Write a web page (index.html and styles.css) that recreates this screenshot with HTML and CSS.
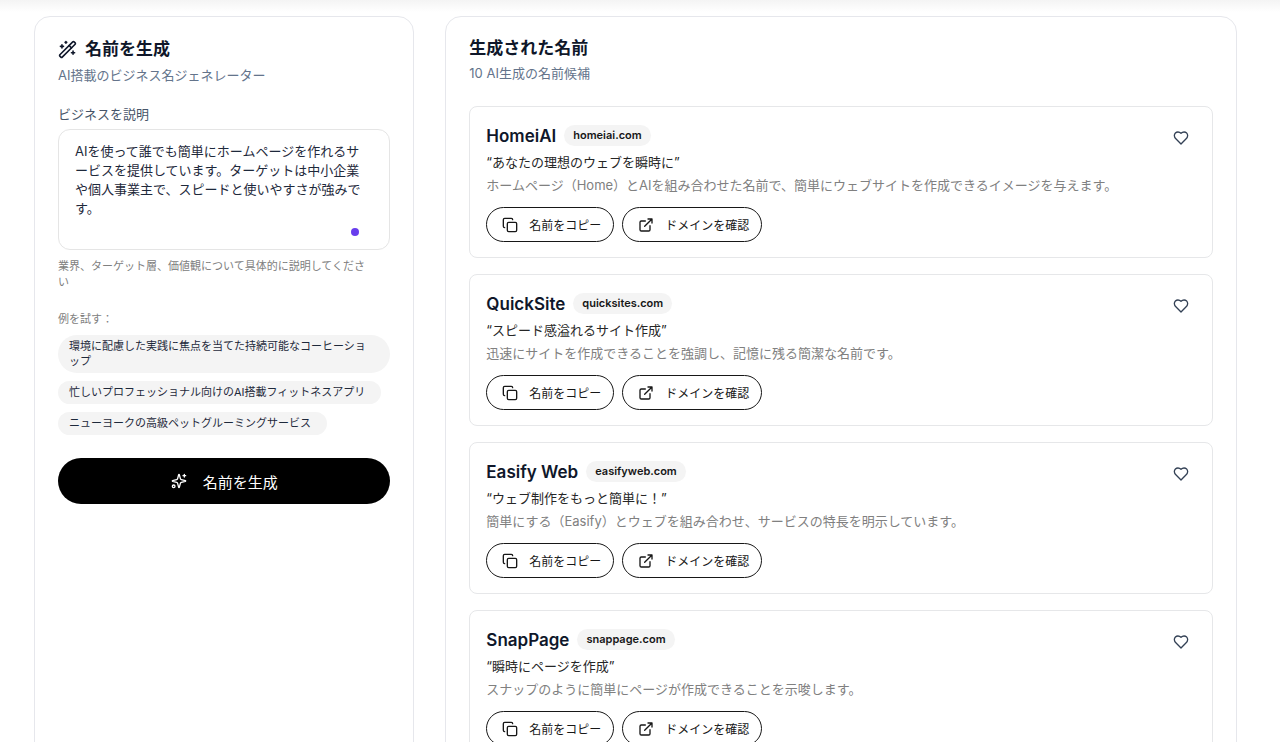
FILE: index.html
```html
<!DOCTYPE html>
<html lang="ja">
<head>
<meta charset="utf-8">
<meta name="viewport" content="width=device-width, initial-scale=1">
<title>名前を生成</title>
<link rel="stylesheet" href="styles.css">
</head>
<body>
<svg class="sprite" aria-hidden="true">
  <symbol id="wand" viewBox="0 0 24 24"><path d="m21.64 3.64-1.28-1.28a1.21 1.21 0 0 0-1.72 0L2.36 18.64a1.21 1.21 0 0 0 0 1.72l1.28 1.28a1.2 1.2 0 0 0 1.72 0L21.64 5.36a1.2 1.2 0 0 0 0-1.72"/><path d="m14 7 3 3M5 6v4M19 14v4M10 2v2M7 8H3M21 16h-4M11 3H9"/></symbol>
  <symbol id="sparkles" viewBox="0 0 24 24"><path d="M9.937 15.5A2 2 0 0 0 8.5 14.063l-6.135-1.582a.5.5 0 0 1 0-.962L8.5 9.936A2 2 0 0 0 9.937 8.5l1.582-6.135a.5.5 0 0 1 .963 0L14.063 8.5A2 2 0 0 0 15.5 9.937l6.135 1.581a.5.5 0 0 1 0 .964L15.5 14.063a2 2 0 0 0-1.437 1.437l-1.582 6.135a.5.5 0 0 1-.963 0z"/><path d="M20 2v4M22 4h-4"/><circle cx="4" cy="20" r="2"/></symbol>
  <symbol id="copy" viewBox="0 0 24 24"><rect x="8" y="8" width="14" height="14" rx="2"/><path d="M4 16c-1.1 0-2-.9-2-2V4c0-1.100.9-2 2-2h10c1.100 0 2 .9 2 2"/></symbol>
  <symbol id="external" viewBox="0 0 24 24"><path d="M15 3h6v6M10 14 21 3M18 13v6a2 2 0 0 1-2 2H5a2 2 0 0 1-2-2V8a2 2 0 0 1 2-2h6"/></symbol>
  <symbol id="heart" viewBox="0 0 24 24"><path d="M19 14c1.490-1.460 3-3.210 3-5.500A5.500 5.500 0 0 0 16.500 3c-1.760 0-3 .5-4.500 2-1.500-1.500-2.740-2-4.500-2A5.500 5.500 0 0 0 2 8.500c0 2.300 1.500 4.050 3 5.500l7 7Z"/></symbol>
</svg>
<main class="page">
  <section class="panel form-panel">
    <h2 class="panel-title"><svg class="icon icon-lg"><use href="#wand"/></svg>名前を生成</h2>
    <p class="panel-subtitle">AI搭載のビジネス名ジェネレーター</p>
    <form class="form">
      <label class="field-label" for="description">ビジネスを説明</label>
      <div class="textbox">
        <textarea class="textarea" id="description">AIを使って誰でも簡単にホームページを作れるサービスを提供しています。ターゲットは中小企業や個人事業主で、スピードと使いやすさが強みです。</textarea>
        <span class="dot"></span>
      </div>
      <p class="hint">業界、ターゲット層、価値観について具体的に説明してください</p>
      <p class="examples-label">例を試す：</p>
      <div class="chips">
        <button class="chip" type="button">環境に配慮した実践に焦点を当てた持続可能なコーヒーショップ</button>
        <button class="chip" type="button">忙しいプロフェッショナル向けのAI搭載フィットネスアプリ</button>
        <button class="chip" type="button">ニューヨークの高級ペットグルーミングサービス</button>
      </div>
      <button class="generate" type="button"><svg class="icon"><use href="#sparkles"/></svg>名前を生成</button>
    </form>
  </section>

  <section class="panel results-panel">
    <h2 class="panel-title results-title">生成された名前</h2>
    <p class="panel-subtitle">10 AI生成の名前候補</p>
    <div class="results">
      <article class="card">
        <div class="card-body">
          <div class="card-head"><h3 class="name">HomeiAI</h3><span class="domain">homeiai.com</span></div>
          <p class="tagline">“あなたの理想のウェブを瞬時に”</p>
          <p class="reason">ホームページ（Home）とAIを組み合わせた名前で、簡単にウェブサイトを作成できるイメージを与えます。</p>
          <div class="actions">
            <button class="action" type="button"><svg class="icon"><use href="#copy"/></svg>名前をコピー</button>
            <button class="action" type="button"><svg class="icon"><use href="#external"/></svg>ドメインを確認</button>
          </div>
        </div>
        <button class="favorite" type="button" aria-label="お気に入り"><svg class="icon"><use href="#heart"/></svg></button>
      </article>
      <article class="card">
        <div class="card-body">
          <div class="card-head"><h3 class="name">QuickSite</h3><span class="domain">quicksites.com</span></div>
          <p class="tagline">“スピード感溢れるサイト作成”</p>
          <p class="reason">迅速にサイトを作成できることを強調し、記憶に残る簡潔な名前です。</p>
          <div class="actions">
            <button class="action" type="button"><svg class="icon"><use href="#copy"/></svg>名前をコピー</button>
            <button class="action" type="button"><svg class="icon"><use href="#external"/></svg>ドメインを確認</button>
          </div>
        </div>
        <button class="favorite" type="button" aria-label="お気に入り"><svg class="icon"><use href="#heart"/></svg></button>
      </article>
      <article class="card">
        <div class="card-body">
          <div class="card-head"><h3 class="name">Easify Web</h3><span class="domain">easifyweb.com</span></div>
          <p class="tagline">“ウェブ制作をもっと簡単に！”</p>
          <p class="reason">簡単にする（Easify）とウェブを組み合わせ、サービスの特長を明示しています。</p>
          <div class="actions">
            <button class="action" type="button"><svg class="icon"><use href="#copy"/></svg>名前をコピー</button>
            <button class="action" type="button"><svg class="icon"><use href="#external"/></svg>ドメインを確認</button>
          </div>
        </div>
        <button class="favorite" type="button" aria-label="お気に入り"><svg class="icon"><use href="#heart"/></svg></button>
      </article>
      <article class="card">
        <div class="card-body">
          <div class="card-head"><h3 class="name">SnapPage</h3><span class="domain">snappage.com</span></div>
          <p class="tagline">“瞬時にページを作成”</p>
          <p class="reason">スナップのように簡単にページが作成できることを示唆します。</p>
          <div class="actions">
            <button class="action" type="button"><svg class="icon"><use href="#copy"/></svg>名前をコピー</button>
            <button class="action" type="button"><svg class="icon"><use href="#external"/></svg>ドメインを確認</button>
          </div>
        </div>
        <button class="favorite" type="button" aria-label="お気に入り"><svg class="icon"><use href="#heart"/></svg></button>
      </article>
    </div>
  </section>
</main>
</body>
</html>
```

FILE: styles.css
```css
* { box-sizing: border-box; }
body, h2, h3, p { margin: 0; }
body {
  background: #fff;
  color: #0f172a;
  font-family: Inter, "Noto Sans CJK JP", sans-serif;
  font-size: 13px;
  line-height: 20px;
}
button, textarea { font-family: inherit; color: inherit; }
button { cursor: pointer; }
.sprite { display: none; }
.icon {
  width: 16px;
  height: 16px;
  flex: none;
  fill: none;
  stroke: currentColor;
  stroke-width: 2;
  stroke-linecap: round;
  stroke-linejoin: round;
}
.icon-lg { width: 19px; height: 19px; }

.page {
  display: grid;
  grid-template-columns: repeat(3, minmax(0, 1fr));
  gap: 31px;
  height: 100vh;
  overflow: hidden;
  padding: 16px 43px 0 34px;
  background: linear-gradient(#f4f4f4, #fff 12px);
}
.panel {
  height: max-content;
  min-height: 100%;
  padding: 20px 23px 24px;
  border: 1px solid #e6e7ec;
  border-radius: 16px;
  background: #fff;
}
.results-panel { grid-column: span 2; }
.panel-title {
  display: flex;
  align-items: center;
  gap: 8px;
  margin-bottom: 4px;
  font-size: 17px;
  line-height: 24px;
  font-weight: 600;
}
.results-title { line-height: 22px; }
.panel-subtitle { color: #64748b; }

.form { display: flex; flex-direction: column; margin-top: 19px; }
.field-label { margin-bottom: 5px; color: #475569; }
.textbox { display: flex; position: relative; }
.textarea {
  width: 100%;
  height: 121px;
  padding: 12px 20px 12px 16px;
  border: 1px solid #e5e5e5;
  border-radius: 12px;
  background: #fff;
  outline: 0;
  resize: none;
  overflow: hidden;
  color: #1e293b;
  font-size: 13px;
  line-height: 19px;
}
.dot {
  position: absolute;
  right: 31px;
  bottom: 14px;
  width: 8px;
  height: 8px;
  border-radius: 50%;
  background: #683ded;
}
.hint, .examples-label { color: #808080; font-size: 11px; line-height: 16px; }
.hint { margin-top: 8px; padding-right: 16px; }
.examples-label { margin-top: 21px; }
.chips { display: flex; flex-direction: column; align-items: flex-start; gap: 8px; margin-top: 8px; }
.chip {
  padding: 4px 16px 4px 11px;
  border: 0;
  border-radius: 20px;
  background: #f4f4f4;
  color: #1e293b;
  font-size: 11px;
  line-height: 15px;
  text-align: left;
}
.generate {
  display: flex;
  align-items: center;
  justify-content: center;
  gap: 16px;
  height: 46px;
  margin-top: 23px;
  border: 0;
  border-radius: 23px;
  background: #000;
  color: #fff;
  font-size: 15px;
}

.results { display: flex; flex-direction: column; gap: 16px; margin-top: 23px; }
.card {
  display: flex;
  align-items: flex-start;
  justify-content: space-between;
  padding: 15px 15px 15px 16px;
  border: 1px solid #e6e7e9;
  border-radius: 8px;
}
.card-head { display: flex; align-items: center; gap: 8px; height: 27px; margin-bottom: 3px; }
.name { font-size: 17px; font-weight: 600; }
.domain {
  padding: 0 9px;
  border-radius: 11px;
  background: #f4f4f4;
  color: #171717;
  font-size: 11px;
  line-height: 21px;
  font-weight: 600;
}
.tagline { margin-bottom: 3px; color: #262626; }
.reason { color: #808080; }
.actions { display: flex; flex-wrap: wrap; gap: 8px; margin-top: 12px; }
.action {
  display: flex;
  align-items: center;
  gap: 11px;
  height: 35px;
  padding: 0 12px 0 15px;
  border: 1px solid #171717;
  border-radius: 18px;
  background: #fff;
  color: #171717;
  font-size: 12px;
}
.favorite {
  display: flex;
  align-items: center;
  justify-content: center;
  width: 32px;
  height: 32px;
  padding: 0;
  border: 0;
  border-radius: 8px;
  background: none;
  color: #334155;
}
```
